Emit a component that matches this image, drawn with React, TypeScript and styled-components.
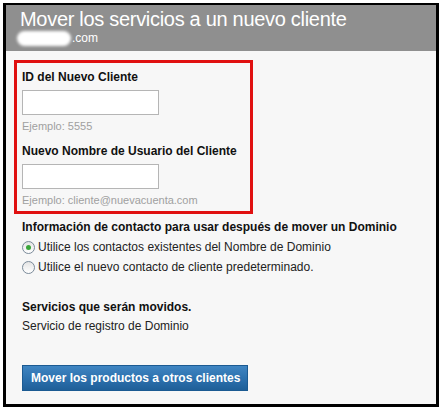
import React from "react";
import styled, { createGlobalStyle } from "styled-components";

const GlobalStyle = createGlobalStyle`
  body {
    margin: 0;
    background: #ffffff;
    font-family: "Liberation Sans", Arial, sans-serif;
  }
`;

const Frame = styled.div`
  margin: 3px 0 0 3px;
  width: 430px;
  border: 3px solid #000;
  border-top-width: 2px;
  background: #f7f7f7;
`;

const Header = styled.header`
  background: #8f8f8f;
  padding: 3px 14px 5px;
  color: #fff;
`;

const Title = styled.h1`
  margin: 0;
  font-size: 20px;
  letter-spacing: -0.3px;
  line-height: 22px;
  font-weight: normal;
`;

const Domain = styled.div`
  display: flex;
  align-items: center;
  font-size: 12px;
  line-height: 16px;
  margin-left: -3px;
`;

const Blur = styled.span`
  display: inline-block;
  width: 54px;
  height: 15px;
  background: #fff;
  border-radius: 8px;
  filter: blur(1.5px);
  margin-right: 1px;
`;

const Content = styled.main`
  padding: 9px 8px 13px;
`;

const Highlight = styled.section`
  width: 223px;
  border: 3px solid #e01010;
  padding: 7px 5px 4px;
`;

const Label = styled.div<{ $top?: number }>`
  font-size: 12px;
  line-height: 15px;
  font-weight: bold;
  color: #111;
  margin-top: ${(p) => p.$top ?? 0}px;
`;

const Input = styled.input`
  display: block;
  box-sizing: border-box;
  width: 137px;
  height: 25px;
  margin-top: 5px;
  border: 1px solid #b5b5b5;
  background: #fff;
`;

const Hint = styled.div`
  font-size: 11px;
  line-height: 14px;
  color: #a0a0a0;
  margin-top: 4px;
`;

const Section = styled.div`
  padding-left: 8px;
`;

const RadioRow = styled.label<{ $top: number }>`
  display: flex;
  align-items: center;
  gap: 3px;
  font-size: 12px;
  line-height: 16px;
  color: #222;
  margin-top: ${(p) => p.$top}px;
`;

const RadioDot = styled.span<{ $checked?: boolean }>`
  position: relative;
  width: 13px;
  height: 13px;
  box-sizing: border-box;
  border-radius: 50%;
  border: 1px solid #7a8a99;
  background: linear-gradient(#e4e4e4, #ffffff);
  flex-shrink: 0;

  &::after {
    content: "";
    display: ${(p) => (p.$checked ? "block" : "none")};
    position: absolute;
    left: 3px;
    top: 3px;
    width: 5px;
    height: 5px;
    border-radius: 50%;
    background: #3aa63a;
  }
`;

const Text = styled.div`
  font-size: 12px;
  line-height: 15px;
  color: #222;
  margin-top: 4px;
`;

const Button = styled.button`
  margin-top: 31px;
  width: 226px;
  height: 26px;
  padding: 0 0 0 8px;
  text-align: left;
  border: 1px solid #1b5a92;
  background: linear-gradient(#3f85c2, #2a6eab 60%, #1f5f98);
  color: #fff;
  font-family: "Liberation Sans", Arial, sans-serif;
  font-size: 12px;
  font-weight: bold;
`;

const App = () => {
  return (
    <>
      <GlobalStyle />
      <Frame>
        <Header>
          <Title>Mover los servicios a un nuevo cliente</Title>
          <Domain>
            <Blur />
            .com
          </Domain>
        </Header>
        <Content>
          <Highlight>
            <Label>ID del Nuevo Cliente</Label>
            <Input />
            <Hint>Ejemplo: 5555</Hint>
            <Label $top={11}>Nuevo Nombre de Usuario del Cliente</Label>
            <Input />
            <Hint>Ejemplo: cliente@nuevacuenta.com</Hint>
          </Highlight>
          <Section>
            <Label $top={6}>
              Información de contacto para usar después de mover un Dominio
            </Label>
            <RadioRow $top={4}>
              <RadioDot $checked />
              Utilice los contactos existentes del Nombre de Dominio
            </RadioRow>
            <RadioRow $top={4}>
              <RadioDot />
              Utilice el nuevo contacto de cliente predeterminado.
            </RadioRow>
            <Label $top={25}>Servicios que serán movidos.</Label>
            <Text>Servicio de registro de Dominio</Text>
            <Button>Mover los productos a otros clientes</Button>
          </Section>
        </Content>
      </Frame>
    </>
  );
};

export default App;
